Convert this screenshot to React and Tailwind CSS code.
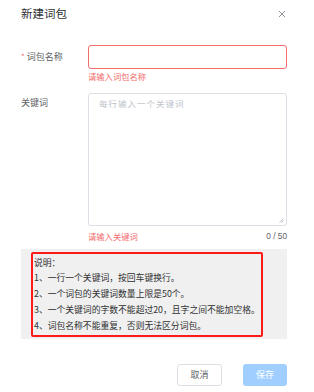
import React from 'react';

const App = () => {
  return (
    <div
      className="w-[314px] h-[392px] bg-white overflow-hidden text-[#606266]"
      style={{ fontFamily: '"Noto Sans CJK SC", "Noto Sans", sans-serif' }}
    >
      <div className="flex items-center justify-between pl-[21px] pr-[27px] pt-[5px] h-[22px]">
        <span className="text-[11.5px] leading-none text-[#303133]">新建词包</span>
        <svg width="8" height="8" viewBox="0 0 8 8" className="mt-[1px] mr-[1px]">
          <path d="M1 1L7 7M7 1L1 7" stroke="#909399" strokeWidth="1" />
        </svg>
      </div>

      <div className="pl-[21px] pr-[27px] pt-[23px]">
        <div className="flex">
          <label className="w-[67px] h-[24px] flex items-center text-[9px] text-[#606266]">
            <span className="text-[#F56C6C] mr-[2px] text-[8px]">*</span>
            词包名称
          </label>
          <div className="flex-1">
            <div className="h-[24px] border border-[#F56C6C] rounded-[3px] bg-white"></div>
            <div className="text-[8.3px] leading-none text-[#F56C6C] mt-[3px]">请输入词包名称</div>
          </div>
        </div>

        <div className="flex mt-[13px]">
          <label className="w-[67px] pt-[5px] text-[9px] leading-none text-[#606266]">关键词</label>
          <div className="flex-1">
            <div className="relative h-[133px] border border-[#DCDFE6] rounded-[3px] bg-white">
              <div className="pl-[10px] pt-[5px] text-[8.5px] leading-none tracking-[1px] text-[#C0C4CC]">
                每行输入一个关键词
              </div>
              <svg width="5" height="5" viewBox="0 0 5 5" className="absolute right-[2px] bottom-[2px]">
                <path d="M0.5 4.5L4.5 0.5M2.5 4.5L4.5 2.5" stroke="#909399" strokeWidth="0.6" />
              </svg>
            </div>
            <div className="flex justify-between mt-[6px] text-[8.3px] leading-none">
              <span className="text-[#F56C6C]">请输入关键词</span>
              <span className="text-[#606266]" style={{ fontFamily: '"Liberation Sans", sans-serif' }}>0 / 50</span>
            </div>
          </div>
        </div>

        <div className="mt-[8px] h-[90px] bg-[#F0F0F0] pt-[3px] pl-[10px] pr-[24px]">
          <div className="h-[85px] border-2 border-[#FF1A1A] rounded-[2px] pl-[1px] pt-[1px] text-[8.8px] leading-[15.8px] text-[#303133]">
            <div>说明：</div>
            <div>1、一行一个关键词，按回车键换行。</div>
            <div>2、一个词包的关键词数量上限是50个。</div>
            <div>3、一个关键词的字数不能超过20，且字之间不能加空格。</div>
            <div>4、词包名称不能重复，否则无法区分词包。</div>
          </div>
        </div>

        <div className="flex justify-end gap-[21px] mt-[25px]">
          <button className="w-[45px] h-[22px] border border-[#DCDFE6] rounded-[3px] bg-white text-[9px] text-[#606266]">
            取消
          </button>
          <button className="w-[44px] h-[22px] rounded-[3px] bg-[#A0CFFF] text-[9px] text-white">
            保存
          </button>
        </div>
      </div>
    </div>
  );
};

export default App;
